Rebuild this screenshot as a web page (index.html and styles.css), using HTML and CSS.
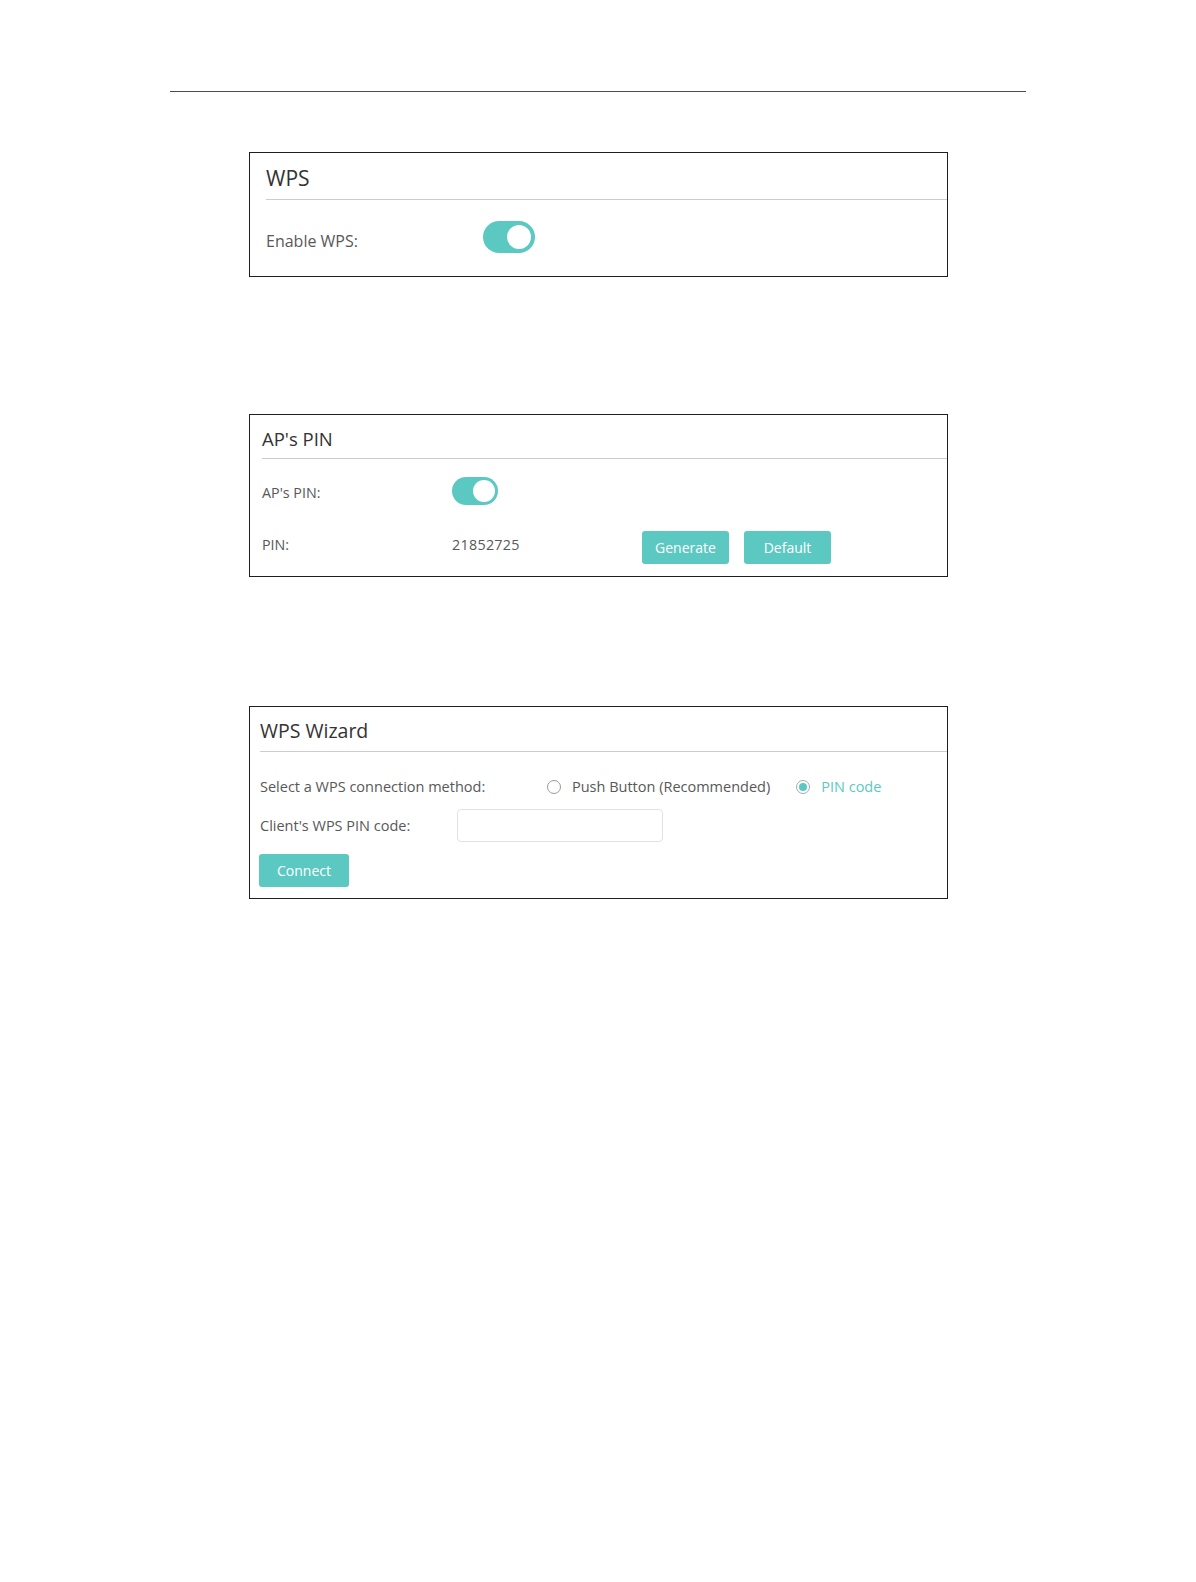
FILE: index.html
```html
<!DOCTYPE html>
<html lang="en">
<head>
<meta charset="utf-8">
<title>WPS</title>
<link rel="stylesheet" href="styles.css">
</head>
<body>
<div class="page">
  <div class="doc-rule"></div>

  <section class="panel panel-wps">
    <div class="panel-head"><h2 class="panel-title">WPS</h2></div>
    <div class="row">
      <span class="label">Enable WPS:</span>
      <span class="toggle toggle-lg"><span class="knob"></span></span>
    </div>
  </section>

  <section class="panel panel-pin">
    <div class="panel-head"><h2 class="panel-title">AP's PIN</h2></div>
    <div class="row row-first">
      <span class="label">AP's PIN:</span>
      <span class="toggle toggle-sm"><span class="knob"></span></span>
    </div>
    <div class="row row-second">
      <span class="label">PIN:</span>
      <span class="value">21852725</span>
      <div class="btn-group">
        <button class="btn btn-pin">Generate</button>
        <button class="btn btn-pin">Default</button>
      </div>
    </div>
  </section>

  <section class="panel panel-wizard">
    <div class="panel-head"><h2 class="panel-title">WPS Wizard</h2></div>
    <div class="row row-method">
      <span class="label label-method">Select a WPS connection method:</span>
      <label class="radio"><span class="radio-dot"></span><span class="radio-text">Push Button (Recommended)</span></label>
      <label class="radio radio-on"><span class="radio-dot"></span><span class="radio-text">PIN code</span></label>
    </div>
    <div class="row row-client">
      <span class="label label-client">Client's WPS PIN code:</span>
      <input class="text-input" type="text">
    </div>
    <div class="row row-connect">
      <button class="btn btn-connect">Connect</button>
    </div>
  </section>
</div>
</body>
</html>
```

FILE: styles.css
```css
* { box-sizing: border-box; }

html, body {
  margin: 0;
  padding: 0;
  background: #ffffff;
}

body {
  font-family: "Open Sans", "Noto Sans", "Liberation Sans", sans-serif;
  color: #585858;
}

.page {
  width: 1196px;
  min-height: 1582px;
  padding-top: 91px;
}

.doc-rule {
  margin-left: 170px;
  width: 856px;
  height: 1px;
  background: #4d4d4d;
}

.panel {
  margin-left: 249px;
  width: 699px;
  border: 1px solid #1f1f1f;
  background: #fff;
}

.panel-head {
  border-bottom: 1px solid #cccccc;
}

.panel-title {
  margin: 0;
  font-weight: 400;
  color: #333333;
}

.row {
  display: flex;
  align-items: flex-start;
}

.label { flex: none; }

/* ---------- panel 1 ---------- */
.panel-wps {
  margin-top: 60px;
  height: 125px;
  padding-left: 16px;
  padding-top: 11px;
}
.panel-wps .panel-head { padding-bottom: 7px; }
.panel-wps .panel-title { font-size: 21px; line-height: 28px; }
.panel-wps .row { margin-top: 21px; }
.panel-wps .label {
  width: 217px;
  font-size: 16px;
  line-height: 32px;
  padding-top: 4px;
}

/* toggle */
.toggle {
  position: relative;
  display: block;
  flex: none;
  background: #5cc8c2;
}
.toggle .knob {
  position: absolute;
  background: #ffffff;
  border-radius: 50%;
}
.toggle-lg { width: 52px; height: 32px; border-radius: 16px; }
.toggle-lg .knob { width: 24px; height: 24px; top: 4px; right: 4px; }
.toggle-sm { width: 46px; height: 28px; border-radius: 14px; }
.toggle-sm .knob { width: 22px; height: 22px; top: 3px; right: 3px; }

/* ---------- panel 2 ---------- */
.panel-pin {
  margin-top: 137px;
  height: 163px;
  padding-left: 12px;
  padding-top: 11px;
}
.panel-pin .panel-head { padding-bottom: 7px; }
.panel-pin .panel-title { font-size: 18.5px; line-height: 25px; }
.panel-pin .label {
  width: 190px;
  font-size: 14.3px;
  line-height: 28px;
}
.row-first { margin-top: 18px; }
.row-first .label { padding-top: 2px; }
.row-second { margin-top: 24px; }
.row-second .label { line-height: 27px; }
.value {
  width: 190px;
  font-size: 14.3px;
  line-height: 27px;
  letter-spacing: 0.3px;
}
.btn-group {
  display: flex;
  gap: 15px;
}

.btn {
  border: 0;
  margin: 0;
  padding: 0;
  background: #5cc8c2;
  color: #ffffff;
  font-family: "Open Sans", "Noto Sans", "Liberation Sans", sans-serif;
  font-size: 14px;
  border-radius: 3px;
  text-align: center;
}
.btn-pin { width: 87px; height: 33px; line-height: 33px; }

/* ---------- panel 3 ---------- */
.panel-wizard {
  margin-top: 129px;
  height: 193px;
  padding-left: 10px;
  padding-top: 11px;
}
.panel-wizard .panel-head { padding-bottom: 7px; }
.panel-wizard .panel-title { font-size: 19.5px; line-height: 26px; }

.row-method {
  margin-top: 24px;
  align-items: center;
  font-size: 14.5px;
  line-height: 22px;
}
.label-method { width: 287px; }

.radio {
  display: flex;
  align-items: center;
  color: #585858;
}
.radio + .radio { margin-left: 26px; }
.radio-dot {
  position: relative;
  width: 14px;
  height: 14px;
  border: 1px solid #9a9a9a;
  border-radius: 50%;
  margin-right: 11px;
  margin-top: -1px;
}
.radio-text { line-height: 22px; margin-top: -1px; }
.radio-on .radio-dot { border-color: #a8a8a8; }
.radio-on .radio-dot::after {
  content: "";
  position: absolute;
  left: 2px;
  top: 2px;
  width: 8px;
  height: 8px;
  border-radius: 50%;
  background: #5cc8c2;
}
.radio-on .radio-text { color: #5cc8c2; }

.row-client { margin-top: 11px; }
.label-client {
  width: 197px;
  font-size: 14.5px;
  line-height: 33px;
}
.text-input {
  width: 206px;
  height: 33px;
  margin: 0;
  border: 1px solid #e2e2e2;
  border-radius: 4px;
  background: #fff;
  outline: none;
}

.row-connect { margin-top: 12px; }
.btn-connect { width: 90px; height: 33px; line-height: 33px; margin-left: -1px; }
```
